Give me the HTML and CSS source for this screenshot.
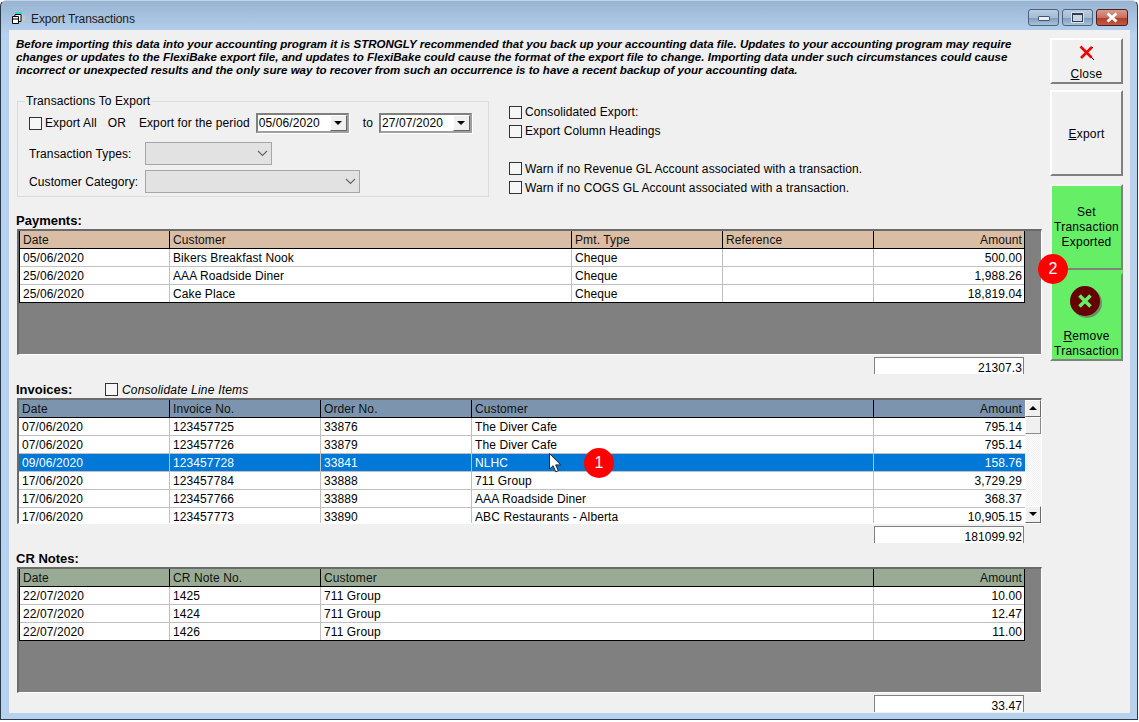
FILE: index.html
```html
<!DOCTYPE html>
<html lang="en">
<head>
    <meta charset="UTF-8">
    <title>Export Transactions</title>
    <link rel="stylesheet" href="styles.css">
</head>
<body>
<div class="window">
    <div class="titlebar">
        <svg class="app-icon" width="15" height="15" viewBox="0 0 15 15">
            <path d="M4 1h7v2H4z" fill="#3ad6d6"/>
            <path d="M10 3l4 2v5l-3 1z" fill="#c8c8c8"/>
            <path d="M4 3.5h6v7H4z" fill="#fff" stroke="#000"/>
            <path d="M1.5 5.5h6v7h-6zM1.5 8h6" fill="#fff" stroke="#000"/>
        </svg>
        <span class="title">Export Transactions</span>
        <div class="win-btns">
            <div class="win-btn"><span class="glyph-min"></span></div>
            <div class="win-btn"><span class="glyph-max"></span></div>
            <div class="win-btn win-close">
                <svg width="14" height="11" viewBox="0 0 14 11"><path d="M2.5 1.5l9 8M11.5 1.5l-9 8" stroke="#fff" stroke-width="3"/></svg>
            </div>
        </div>
    </div>

    <div class="client">
        <div class="main">
            <p class="notice">Before importing this data into your accounting program it is STRONGLY recommended that you back up your accounting data file. Updates to your accounting program may require<br>changes or updates to the FlexiBake export file, and updates to FlexiBake could cause the format of the export file to change. Importing data under such circumstances could cause<br>incorrect or unexpected results and the only sure way to recover from such an occurrence is to have a recent backup of your accounting data.</p>

            <div class="options">
                <fieldset class="group">
                    <legend>Transactions To Export</legend>
                    <div class="period-row">
                        <label class="check"><input type="checkbox">Export All</label>
                        <span class="or">OR</span>
                        <span>Export for the period</span>
                        <div class="date-box"><span>05/06/2020</span><i class="date-drop"></i></div>
                        <span class="to">to</span>
                        <div class="date-box"><span>27/07/2020</span><i class="date-drop"></i></div>
                    </div>
                    <div class="combo-row">
                        <span class="combo-label">Transaction Types:</span>
                        <div class="combo combo-short"><svg width="11" height="7" viewBox="0 0 11 7"><path d="M1 1l4.5 4.5L10 1" fill="none" stroke="#666" stroke-width="1.2"/></svg></div>
                    </div>
                    <div class="combo-row">
                        <span class="combo-label">Customer Category:</span>
                        <div class="combo combo-long"><svg width="11" height="7" viewBox="0 0 11 7"><path d="M1 1l4.5 4.5L10 1" fill="none" stroke="#666" stroke-width="1.2"/></svg></div>
                    </div>
                </fieldset>
                <div class="flags">
                    <label class="check"><input type="checkbox">Consolidated Export:</label>
                    <label class="check"><input type="checkbox">Export Column Headings</label>
                    <label class="check flag-gap"><input type="checkbox">Warn if no Revenue GL Account associated with a transaction.</label>
                    <label class="check"><input type="checkbox">Warn if no COGS GL Account associated with a transaction.</label>
                </div>
            </div>

            <section class="block block-first">
                <div class="block-label"><b>Payments:</b></div>
                <div class="grid-box">
                    <div class="table payments">
                        <div class="row head"><span>Date</span><span>Customer</span><span>Pmt. Type</span><span>Reference</span><span class="num">Amount</span></div>
                        <div class="row"><span>05/06/2020</span><span>Bikers Breakfast Nook</span><span>Cheque</span><span></span><span class="num">500.00</span></div>
                        <div class="row"><span>25/06/2020</span><span>AAA Roadside Diner</span><span>Cheque</span><span></span><span class="num">1,988.26</span></div>
                        <div class="row"><span>25/06/2020</span><span>Cake Place</span><span>Cheque</span><span></span><span class="num">18,819.04</span></div>
                    </div>
                </div>
                <div class="total">21307.3</div>
            </section>

            <section class="block">
                <div class="block-label">
                    <b>Invoices:</b>
                    <label class="check consolidate"><input type="checkbox">Consolidate Line Items</label>
                </div>
                <div class="grid-box grid-scroll">
                    <div class="table invoices">
                        <div class="row head"><span>Date</span><span>Invoice No.</span><span>Order No.</span><span>Customer</span><span class="num">Amount</span></div>
                        <div class="row"><span>07/06/2020</span><span>123457725</span><span>33876</span><span>The Diver Cafe</span><span class="num">795.14</span></div>
                        <div class="row"><span>07/06/2020</span><span>123457726</span><span>33879</span><span>The Diver Cafe</span><span class="num">795.14</span></div>
                        <div class="row selected"><span>09/06/2020</span><span>123457728</span><span>33841</span><span>NLHC</span><span class="num">158.76</span></div>
                        <div class="row"><span>17/06/2020</span><span>123457784</span><span>33888</span><span>711 Group</span><span class="num">3,729.29</span></div>
                        <div class="row"><span>17/06/2020</span><span>123457766</span><span>33889</span><span>AAA Roadside Diner</span><span class="num">368.37</span></div>
                        <div class="row"><span>17/06/2020</span><span>123457773</span><span>33890</span><span>ABC Restaurants - Alberta</span><span class="num">10,905.15</span></div>
                    </div>
                    <div class="scrollbar">
                        <div class="sb-btn"><i class="arrow-up"></i></div>
                        <div class="sb-thumb"></div>
                        <div class="sb-track"></div>
                        <div class="sb-btn"><i class="arrow-down"></i></div>
                    </div>
                </div>
                <div class="total">181099.92</div>
            </section>

            <section class="block">
                <div class="block-label"><b>CR Notes:</b></div>
                <div class="grid-box">
                    <div class="table notes">
                        <div class="row head"><span>Date</span><span>CR Note No.</span><span>Customer</span><span class="num">Amount</span></div>
                        <div class="row"><span>22/07/2020</span><span>1425</span><span>711 Group</span><span class="num">10.00</span></div>
                        <div class="row"><span>22/07/2020</span><span>1424</span><span>711 Group</span><span class="num">12.47</span></div>
                        <div class="row"><span>22/07/2020</span><span>1426</span><span>711 Group</span><span class="num">11.00</span></div>
                    </div>
                </div>
                <div class="total">33.47</div>
            </section>
        </div>

        <div class="side">
            <button class="btn btn-close">
                <svg width="16" height="16" viewBox="0 0 16 16">
                    <path d="M2.5 1.5L15 15M14 2L8 8" fill="none" stroke="#000" stroke-width="1"/>
                    <path d="M1.5 1.5L12.5 12.5M13 2L2 13" fill="none" stroke="#f00000" stroke-width="2.6"/>
                </svg>
                <span><u>C</u>lose</span>
            </button>
            <button class="btn btn-export"><span><u>E</u>xport</span></button>
            <button class="btn btn-green btn-set"><span>Set<br>Transaction<br>Exported</span></button>
            <button class="btn btn-green btn-remove">
                <svg width="34" height="34" viewBox="0 0 34 34">
                    <circle cx="18" cy="18" r="15" fill="#6a8f6a"/>
                    <circle cx="16" cy="16" r="15" fill="#660000"/>
                    <path d="M10.5 10.5l11 11M21.5 10.5l-11 11" stroke="#66ee66" stroke-width="3.6"/>
                </svg>
                <span><u>R</u>emove<br>Transaction</span>
            </button>
        </div>
    </div>

    <div class="badge badge-one">1</div>
    <div class="badge badge-two">2</div>
    <svg class="cursor" width="13" height="20" viewBox="0 0 13 20">
        <path d="M.5.5v15.5l3.6-3.2 2.6 6 2.6-1.1-2.6-5.8h5z" fill="#fff" stroke="#222" stroke-width="1"/>
    </svg>
</div>
</body>
</html>
```

FILE: styles.css
```css
html, body {
    margin: 0;
    background-color: #fff;
}

body {
    font-family: "Liberation Sans", Arial, sans-serif;
    font-size: 12px;
    letter-spacing: 0.1px;
    color: #000;
}

.window {
    position: relative;
    box-sizing: border-box;
    width: 1138px;
    height: 720px;
    display: flex;
    flex-direction: column;
    padding: 0 7px 6px 8px;
    border: 1px solid #2b3a46;
    border-top-color: #c4d3e2;
    border-radius: 6px 6px 0 0;
    background: linear-gradient(#98b4d2 0, #b6d2ee 34px, #b6d2ee 100%);
    overflow: hidden;
}

.titlebar {
    flex: none;
    height: 29px;
    display: flex;
    align-items: center;
}

.app-icon {
    margin: 6px 0 0 2px;
}

.title {
    margin: 6px 0 0 5px;
    color: #1c1c1c;
    letter-spacing: -0.12px;
}

.win-btns {
    display: flex;
    gap: 3px;
    margin-left: auto;
    margin-right: 2px;
    margin-top: 4px;
}

.win-btn {
    box-sizing: border-box;
    width: 31px;
    height: 17px;
    display: flex;
    align-items: center;
    justify-content: center;
    border: 1px solid #4e6278;
    border-radius: 3px;
    background: linear-gradient(#b9cde2 0, #a4bcd6 50%, #7f9bb9 52%, #a9c2dc 100%);
}

.win-close {
    width: 32px;
    border-color: #4a1f1c;
    background: linear-gradient(#d99a8c 0, #c96f5f 50%, #b03a28 52%, #c25a45 100%);
}

.glyph-min {
    width: 10px;
    height: 3px;
    margin-top: 2px;
    border: 1px solid #42536a;
    border-radius: 1px;
    background-color: #e8eef4;
}

.glyph-max {
    box-sizing: border-box;
    width: 11px;
    height: 9px;
    border: 1px solid #333f50;
    border-top-width: 2px;
    background-color: #c8d6e6;
    box-shadow: 0 0 0 1px #d8e2ee;
}

.client {
    flex: 1;
    min-height: 0;
    display: flex;
    padding: 8px 7px 0 8px;
    background-color: #f0f0f0;
    overflow: hidden;
}

.main {
    flex: none;
    width: 1025px;
}

.notice {
    height: 39px;
    margin: 0 0 0 -1px;
    font-size: 11.55px;
    font-weight: bold;
    font-style: italic;
    line-height: 13px;
    letter-spacing: 0;
    white-space: nowrap;
}

.options {
    display: flex;
    height: 102px;
    margin-top: 18px;
}

.group {
    box-sizing: border-box;
    width: 472px;
    height: 102px;
    margin: 0;
    padding: 0 0 0 11px;
    border: 1px solid #dcdcdc;
    min-inline-size: 0;
}

.group legend {
    margin-left: -4px;
    padding: 0 1px;
    line-height: 13px;
}

.period-row {
    display: flex;
    align-items: center;
    height: 20px;
    margin-top: 5px;
    white-space: nowrap;
}

.check {
    display: flex;
    align-items: center;
    white-space: nowrap;
}

.check input {
    appearance: none;
    box-sizing: border-box;
    flex: none;
    width: 13px;
    height: 13px;
    margin: 0 3px 0 0;
    border: 1px solid #333;
    background-color: #f6f6f6;
}

.or {
    margin: 0 13px 0 11px;
}

.date-box {
    box-sizing: border-box;
    width: 93px;
    height: 20px;
    display: flex;
    align-items: center;
    justify-content: space-between;
    margin-left: 6px;
    padding-left: 1px;
    border: 2px solid;
    border-color: #808080 #a0a0a0 #a0a0a0 #808080;
    box-shadow: 1px 1px 0 #fff;
    background-color: #fff;
}

.date-drop {
    box-sizing: border-box;
    width: 17px;
    height: 16px;
    border: 1px solid;
    border-color: #fff #666 #666 #fff;
    background-color: #f0f0f0;
}

.date-drop::after,
.arrow-down::after {
    content: "";
    display: block;
    width: 0;
    height: 0;
    margin: 5px auto 0;
    border-left: 4px solid transparent;
    border-right: 4px solid transparent;
    border-top: 4px solid #000;
}

.to {
    margin-left: 14px;
    margin-right: 0;
}

.combo-row {
    display: flex;
    align-items: center;
    margin-top: 9px;
}

.combo-row + .combo-row {
    margin-top: 5px;
}

.combo-label {
    width: 116px;
}

.combo {
    box-sizing: border-box;
    height: 23px;
    display: flex;
    align-items: center;
    justify-content: flex-end;
    padding-right: 3px;
    border: 1px solid #a6a6a6;
    background-color: #e2e2e2;
}

.combo-short {
    width: 127px;
}

.combo-long {
    width: 215px;
}

.flags {
    display: flex;
    flex-direction: column;
    margin: 8px 0 0 20px;
}

.flags .check {
    height: 19px;
}

.flags .flag-gap {
    margin-top: 19px;
}

.block {
    height: 160px;
    margin-top: 9px;
}

.block-first {
    margin-top: 17px;
}

.block-label {
    box-sizing: border-box;
    height: 15px;
    display: flex;
    align-items: center;
    padding-bottom: 2px;
}

.block-label b {
    width: 89px;
    margin-left: -1px;
    font-size: 13px;
    letter-spacing: 0;
}

.consolidate {
    font-style: italic;
    letter-spacing: 0.2px;
}

.consolidate input {
    margin-right: 4px;
}

.grid-box {
    box-sizing: border-box;
    height: 126px;
    padding: 0;
    border: solid;
    border-width: 2px 1px 1px 2px;
    border-color: #6a6a6a #fff #fff #6a6a6a;
    background-color: #808080;
}

.grid-scroll {
    display: flex;
    background-color: #fff;
}

.table {
    width: 1006px;
    overflow: hidden;
    background-color: #fff;
}

.payments, .notes {
    box-sizing: border-box;
    border-left: 1px solid #000;
    border-right: 1px solid #000;
    border-bottom: 1px solid #000;
}

.invoices {
    height: 123px;
    flex: none;
}

.row {
    display: grid;
    height: 18px;
    box-sizing: border-box;
    border-bottom: 1px solid #c0c0c0;
    line-height: 17px;
}

.row:last-child {
    border-bottom: 0;
    height: 17px;
}

.invoices .row:last-child {
    height: 18px;
}

.payments .row {
    grid-template-columns: 150px 402px 151px 151px 1fr;
}

.invoices .row {
    grid-template-columns: 151px 151px 151px 402px 1fr;
}

.notes .row {
    grid-template-columns: 150px 151px 553px 1fr;
}

.row span {
    box-sizing: border-box;
    height: 17px;
    padding: 1px 0 0 3px;
    border-right: 1px solid #c0c0c0;
    white-space: nowrap;
    overflow: hidden;
}

.row span:last-child {
    border-right: 0;
}

.row .num {
    padding-right: 3px;
    text-align: right;
}

.payments .num, .notes .num {
    padding-right: 2px;
}

.row.head {
    height: 18px;
    border-bottom: 1px solid #000;
    color: #111;
}

.row.head span {
    border-right: 1px solid #000;
}

.row.head span:last-child {
    border-right: 0;
}

.payments .head {
    background-color: #d9bea5;
}

.invoices .head {
    background-color: #7c94ad;
}

.notes .head {
    background-color: #9aab95;
}

.row.selected {
    background-color: #0078d7;
    color: #fff;
}

.scrollbar {
    flex: none;
    width: 16px;
    height: 123px;
    display: flex;
    flex-direction: column;
}

.sb-btn {
    box-sizing: border-box;
    flex: none;
    height: 17px;
    border: 1px solid;
    border-color: #fff #6a6a6a #6a6a6a #fff;
    background-color: #f0f0f0;
}

.sb-thumb {
    box-sizing: border-box;
    flex: none;
    height: 17px;
    border: 1px solid;
    border-color: #fff #8a8a8a #8a8a8a #fff;
    background-color: #f0f0f0;
}

.sb-track {
    flex: 1;
    background: repeating-conic-gradient(#f0f0f0 0 25%, #fff 0 50%) 0 0 / 2px 2px;
}

.arrow-up::after {
    content: "";
    display: block;
    width: 0;
    height: 0;
    margin: 5px auto 0;
    border-left: 4px solid transparent;
    border-right: 4px solid transparent;
    border-bottom: 4px solid #000;
}

.total {
    box-sizing: border-box;
    width: 150px;
    height: 17px;
    margin: 2px 0 0 857px;
    padding: 3px 1px 0 0;
    border: 1px solid #808080;
    border-bottom: 0;
    background-color: #fff;
    text-align: right;
    line-height: 14px;
}

.side {
    flex: none;
    width: 73px;
    margin-left: 8px;
    display: flex;
    flex-direction: column;
}

.btn {
    box-sizing: border-box;
    flex: none;
    width: 73px;
    display: flex;
    flex-direction: column;
    align-items: center;
    justify-content: center;
    padding: 0;
    border: 2px solid;
    border-color: #fff #808080 #808080 #fff;
    background-color: #f0f0f0;
    font-family: inherit;
    font-size: 12px;
    line-height: 15px;
    letter-spacing: 0.25px;
    color: #000;
}

.btn-close {
    height: 46px;
    padding-top: 4px;
}

.btn-close span {
    margin-top: 6px;
}

.btn-export {
    height: 86px;
    margin-top: 6px;
    padding-top: 2px;
}

.btn-green {
    border-color: #f4f4f4 #808080 #808080 #f4f4f4;
    background-color: #66ee66;
}

.btn-set {
    height: 86px;
    margin-top: 8px;
}

.btn-remove {
    height: 88px;
    margin-top: 3px;
    padding-top: 9px;
    border-top-color: #66ee66;
    box-shadow: 0 -3px 0 #66ee66;
}

.btn-remove svg {
    margin-left: -2px;
}

.btn-remove span {
    margin-top: 10px;
}

.badge {
    position: absolute;
    width: 30px;
    height: 30px;
    border-radius: 50%;
    background-color: #f00;
    color: #fff;
    font-size: 16px;
    line-height: 30px;
    text-align: center;
}

.badge-one {
    left: 583px;
    top: 447px;
}

.badge-two {
    left: 1037px;
    top: 253px;
}

.cursor {
    position: absolute;
    left: 548px;
    top: 452px;
}
```
